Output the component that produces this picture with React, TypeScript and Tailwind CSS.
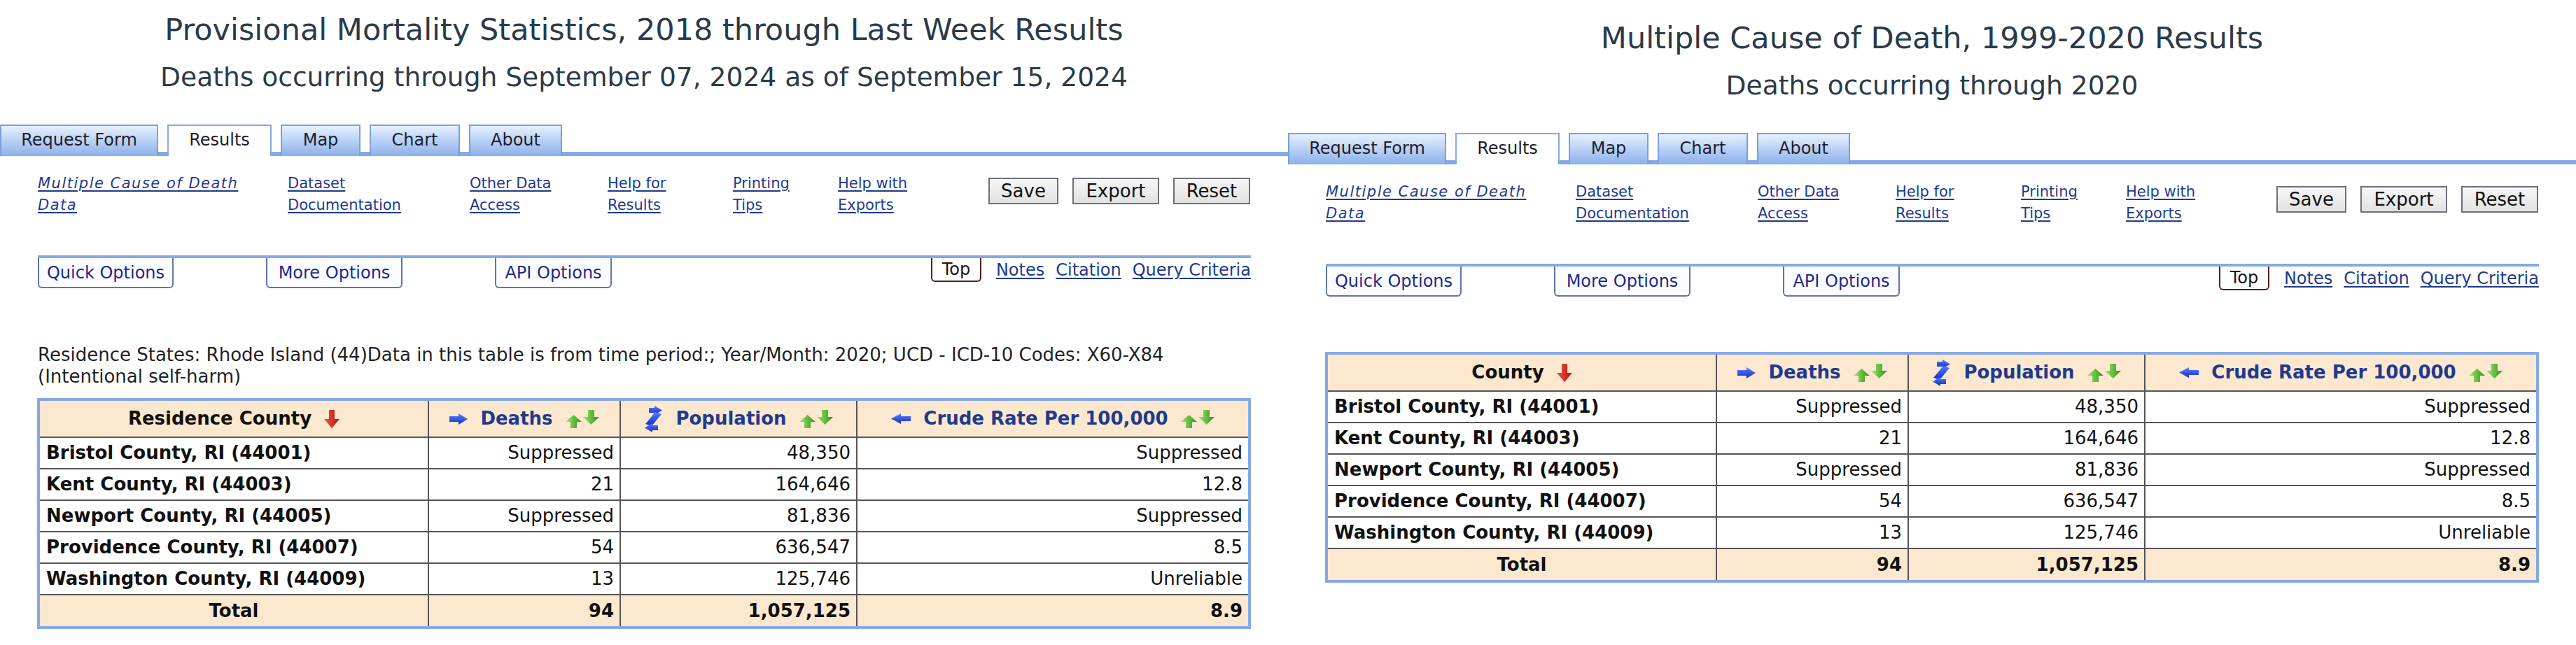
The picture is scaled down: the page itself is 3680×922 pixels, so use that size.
import React from "react";

const BlueRight = () => (
  <svg width="26" height="16" viewBox="0 0 26 16">
    <defs>
      <linearGradient id="br" x1="0" y1="0" x2="0" y2="1">
        <stop offset="0" stopColor="#5a86ff" />
        <stop offset="1" stopColor="#1629c4" />
      </linearGradient>
    </defs>
    <path d="M0 4H13V0L26 8L13 16V12H0Z" fill="url(#br)" />
  </svg>
);

const BlueLeft = () => (
  <svg width="28" height="15" viewBox="0 0 28 15">
    <defs>
      <linearGradient id="bl" x1="0" y1="0" x2="0" y2="1">
        <stop offset="0" stopColor="#5a86ff" />
        <stop offset="1" stopColor="#1629c4" />
      </linearGradient>
    </defs>
    <path d="M28 4H14V0L0 7.5L14 15V11H28Z" fill="url(#bl)" />
  </svg>
);

const ZigZag = () => (
  <svg width="27" height="38" viewBox="0 0 27 38">
    <defs>
      <linearGradient id="zz" x1="0" y1="0" x2="0" y2="1">
        <stop offset="0" stopColor="#4f7dff" />
        <stop offset="1" stopColor="#1629c4" />
      </linearGradient>
    </defs>
    <path d="M7 3H15V0L26 6.5L15 13V10H7Z" fill="url(#zz)" />
    <path d="M16 9L25 12L11 29L2 26Z" fill="url(#zz)" />
    <path d="M20 28H12V25L1 31.5L12 38V35H20Z" fill="url(#zz)" />
  </svg>
);

const RedDown = () => (
  <svg width="22" height="26" viewBox="0 0 22 26">
    <defs>
      <linearGradient id="rd" x1="0" y1="0" x2="1" y2="0">
        <stop offset="0" stopColor="#f2553e" />
        <stop offset="1" stopColor="#b3160e" />
      </linearGradient>
    </defs>
    <path d="M7 0H15V13H22L11 26L0 13H7Z" fill="url(#rd)" />
  </svg>
);

const GreenSort = () => (
  <svg width="48" height="26" viewBox="0 0 48 26">
    <defs>
      <linearGradient id="gu" x1="0" y1="0" x2="1" y2="0">
        <stop offset="0" stopColor="#9be86a" />
        <stop offset="1" stopColor="#2f9418" />
      </linearGradient>
    </defs>
    <path d="M11.5 7L23 17H16V26H7V17H0Z" fill="url(#gu)" />
    <path d="M32 0H41V10H48L36.5 21L25 10H32Z" fill="url(#gu)" />
  </svg>
);

type Cell = { name: string; deaths: string; pop: string; rate: string };

const rows: Cell[] = [
  { name: "Bristol County, RI (44001)", deaths: "Suppressed", pop: "48,350", rate: "Suppressed" },
  { name: "Kent County, RI (44003)", deaths: "21", pop: "164,646", rate: "12.8" },
  { name: "Newport County, RI (44005)", deaths: "Suppressed", pop: "81,836", rate: "Suppressed" },
  { name: "Providence County, RI (44007)", deaths: "54", pop: "636,547", rate: "8.5" },
  { name: "Washington County, RI (44009)", deaths: "13", pop: "125,746", rate: "Unreliable" },
];

const linkCols: { w: string; lines: [string, string]; italic?: boolean }[] = [
  { w: "w-[357px]", lines: ["Multiple Cause of Death", "Data"], italic: true },
  { w: "w-[260px]", lines: ["Dataset", "Documentation"] },
  { w: "w-[197px]", lines: ["Other Data", "Access"] },
  { w: "w-[179px]", lines: ["Help for", "Results"] },
  { w: "w-[150px]", lines: ["Printing", "Tips"] },
  { w: "w-[215px]", lines: ["Help with", "Exports"] },
];

const tabs: { label: string; w: string; active?: boolean }[] = [
  { label: "Request Form", w: "w-[226px]" },
  { label: "Results", w: "w-[149px]", active: true },
  { label: "Map", w: "w-[114px]" },
  { label: "Chart", w: "w-[129px]" },
  { label: "About", w: "w-[133px]" },
];

function Panel({
  title,
  subtitle,
  info,
  firstCol,
  top,
}: {
  title: string;
  subtitle: string;
  info?: string;
  firstCol: string;
  top: string;
}) {
  const hdr = "flex items-center justify-center gap-[18px] text-[26px] font-bold";
  const cellBase = "border-[#555] flex items-center";
  return (
    <div className={`w-[1840px] shrink-0 ${top}`}>
      <div className="flex flex-col items-center text-[#2b3a4a]">
        <div className="text-[43px] leading-[50px] whitespace-nowrap">{title}</div>
        <div className="mt-[21px] text-[37.6px] leading-[44px] whitespace-nowrap">{subtitle}</div>
      </div>

      <div className="mt-[46px] flex h-[45px] items-end gap-[13px] border-b-[6px] border-[#86a9e6]">
        {tabs.map((t) => (
          <div
            key={t.label}
            className={`${t.w} -mb-[6px] flex h-[45px] items-center justify-center border-x-2 border-t-2 pb-[3px] text-[24px] ${
              t.active
                ? "border-[#86a9e6] bg-white text-[#1d1d2b]"
                : "border-[#7b9fdc] bg-gradient-to-b from-[#e6f0fd] to-[#8cb0eb] text-[#1d1d2b]"
            }`}
          >
            {t.label}
          </div>
        ))}
      </div>

      <div className="pl-[54px]">
        <div className="mt-[24px] flex h-[62px]">
          {linkCols.map((c) => (
            <div key={c.lines[0]} className={`${c.w} shrink-0 text-[21px] leading-[31px] text-[#1f3a8f]`}>
              <span
                className={`underline decoration-[2px] underline-offset-[3px] ${
                  c.italic ? "italic tracking-[1.5px]" : ""
                }`}
              >
                {c.lines[0]}
                <br />
                {c.lines[1]}
              </span>
            </div>
          ))}
          <div className="mt-[7px] flex gap-[20px]">
            {[
              ["Save", "w-[100px]"],
              ["Export", "w-[124px]"],
              ["Reset", "w-[110px]"],
            ].map(([l, w]) => (
              <div
                key={l}
                className={`${w} flex h-[38px] items-center justify-center border-2 border-[#6e6e7c] bg-gradient-to-b from-[#f6f6f6] to-[#e2e2e2] text-[26px] text-[#111]`}
              >
                {l}
              </div>
            ))}
          </div>
        </div>

        <div className="mt-[56px] flex w-[1733px] items-start border-t-4 border-[#86a9e6]">
          {[
            ["Quick Options", "w-[194px]", ""],
            ["More Options", "w-[195px]", "ml-[132px]"],
            ["API Options", "w-[167px]", "ml-[132px]"],
          ].map(([l, w, m]) => (
            <div
              key={l}
              className={`${w} ${m} flex h-[43px] items-center justify-center rounded-b-[6px] border-x-2 border-b-2 border-[#5f74ad] bg-[#fbfcff] text-[24px] text-[#1b2a8c]`}
            >
              {l}
            </div>
          ))}
          <div className="ml-auto flex h-[34px] items-center gap-[16px] text-[24px]">
            <div className="mr-[5px] flex h-[34px] w-[72px] items-center justify-center rounded-b-[6px] border-x-2 border-b-2 border-[#5a1e1e] bg-white text-[#2a1010]">
              Top
            </div>
            <span className="text-[#1f3a8f] underline decoration-[2px] underline-offset-[3px]">Notes</span>
            <span className="text-[#1f3a8f] underline decoration-[2px] underline-offset-[3px]">Citation</span>
            <span className="text-[#1f3a8f] underline decoration-[2px] underline-offset-[3px]">Query Criteria</span>
          </div>
        </div>

        {info ? (
          <div className="mt-[80px] w-[1733px] text-[26px] leading-[31px] text-[#222]">{info}</div>
        ) : null}

        <div
          className={`${info ? "mt-[15px]" : "mt-[79px]"} -ml-px grid w-[1734px] grid-cols-[556px_274px_338px_558px] border-4 border-[#86a9e6]`}
        >
          <div className={`${cellBase} ${hdr} h-[53px] border-r-2 border-b-2 bg-[#fbe8cf] text-[#111]`}>
            <span>{firstCol}</span>
            <RedDown />
          </div>
          <div className={`${cellBase} ${hdr} h-[53px] border-r-2 border-b-2 bg-[#fbe8cf] text-[#1f3a8f]`}>
            <BlueRight />
            <span>Deaths</span>
            <GreenSort />
          </div>
          <div className={`${cellBase} ${hdr} h-[53px] border-r-2 border-b-2 bg-[#fbe8cf] text-[#1f3a8f]`}>
            <ZigZag />
            <span>Population</span>
            <GreenSort />
          </div>
          <div className={`${cellBase} ${hdr} h-[53px] border-b-2 bg-[#fbe8cf] text-[#1f3a8f]`}>
            <BlueLeft />
            <span>Crude Rate Per 100,000</span>
            <GreenSort />
          </div>

          {rows.map((r) => (
            <React.Fragment key={r.name}>
              <div className={`${cellBase} h-[45px] border-r-2 border-b-2 bg-white pl-[9px] text-[26px] font-bold text-[#111]`}>
                {r.name}
              </div>
              <div className={`${cellBase} h-[45px] justify-end border-r-2 border-b-2 bg-white pr-[8px] text-[26px] text-[#111]`}>
                {r.deaths}
              </div>
              <div className={`${cellBase} h-[45px] justify-end border-r-2 border-b-2 bg-white pr-[8px] text-[26px] text-[#111]`}>
                {r.pop}
              </div>
              <div className={`${cellBase} h-[45px] justify-end border-b-2 bg-white pr-[8px] text-[26px] text-[#111]`}>
                {r.rate}
              </div>
            </React.Fragment>
          ))}

          <div className={`${cellBase} h-[44px] justify-center border-r-2 bg-[#fbe8cf] text-[26px] font-bold text-[#111]`}>
            Total
          </div>
          <div className={`${cellBase} h-[44px] justify-end border-r-2 bg-[#fbe8cf] pr-[8px] text-[26px] font-bold text-[#111]`}>
            94
          </div>
          <div className={`${cellBase} h-[44px] justify-end border-r-2 bg-[#fbe8cf] pr-[8px] text-[26px] font-bold text-[#111]`}>
            1,057,125
          </div>
          <div className={`${cellBase} h-[44px] justify-end bg-[#fbe8cf] pr-[8px] text-[26px] font-bold text-[#111]`}>
            8.9
          </div>
        </div>
      </div>
    </div>
  );
}

export default function App() {
  return (
    <div className="flex h-[922px] w-[3680px] overflow-hidden bg-white font-['DejaVu_Sans',Verdana,sans-serif]">
      <Panel
        top="pt-[17px]"
        title="Provisional Mortality Statistics, 2018 through Last Week Results"
        subtitle="Deaths occurring through September 07, 2024 as of September 15, 2024"
        info="Residence States: Rhode Island (44)Data in this table is from time period:; Year/Month: 2020; UCD - ICD-10 Codes: X60-X84 (Intentional self-harm)"
        firstCol="Residence County"
      />
      <Panel
        top="pt-[29px]"
        title="Multiple Cause of Death, 1999-2020 Results"
        subtitle="Deaths occurring through 2020"
        firstCol="County"
      />
    </div>
  );
}
